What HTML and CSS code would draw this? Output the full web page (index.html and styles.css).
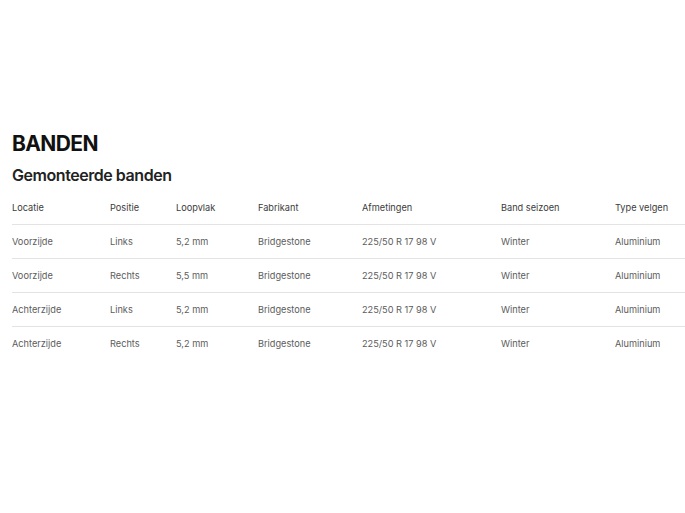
FILE: index.html
```html
<!DOCTYPE html>
<html lang="nl">
<head>
<meta charset="utf-8">
<link rel="stylesheet" href="styles.css">
</head>
<body>
<main class="page">
  <h1 class="title">BANDEN</h1>
  <h2 class="subtitle">Gemonteerde banden</h2>
  <table class="tires">
    <colgroup>
      <col class="c1"><col class="c2"><col class="c3"><col class="c4"><col class="c5"><col class="c6"><col class="c7">
    </colgroup>
    <thead>
      <tr><th>Locatie</th><th>Positie</th><th>Loopvlak</th><th>Fabrikant</th><th>Afmetingen</th><th>Band seizoen</th><th>Type velgen</th></tr>
    </thead>
    <tbody>
      <tr><td>Voorzijde</td><td>Links</td><td>5,2 mm</td><td>Bridgestone</td><td>225/50 R 17 98 V</td><td>Winter</td><td>Aluminium</td></tr>
      <tr><td>Voorzijde</td><td>Rechts</td><td>5,5 mm</td><td>Bridgestone</td><td>225/50 R 17 98 V</td><td>Winter</td><td>Aluminium</td></tr>
      <tr><td>Achterzijde</td><td>Links</td><td>5,2 mm</td><td>Bridgestone</td><td>225/50 R 17 98 V</td><td>Winter</td><td>Aluminium</td></tr>
      <tr><td>Achterzijde</td><td>Rechts</td><td>5,2 mm</td><td>Bridgestone</td><td>225/50 R 17 98 V</td><td>Winter</td><td>Aluminium</td></tr>
    </tbody>
  </table>
</main>
</body>
</html>
```

FILE: styles.css
```css
html, body {
  margin: 0;
  padding: 0;
  background: #ffffff;
  overflow: hidden;
}
body {
  font-family: Inter, "Liberation Sans", sans-serif;
  color: #111;
}
.page {
  padding: 131px 0 0 12px;
}
.title {
  margin: 0;
  font-size: 21px;
  line-height: 26px;
  font-weight: 700;
  letter-spacing: -0.6px;
  color: #111;
}
.subtitle {
  margin: 8px 0 0;
  font-size: 16px;
  line-height: 20px;
  font-weight: 600;
  letter-spacing: -0.45px;
  color: #222;
}
.tires {
  margin-top: 5px;
  border-collapse: collapse;
  table-layout: fixed;
  width: 680px;
}
.c1 { width: 98px; }
.c2 { width: 66px; }
.c3 { width: 82px; }
.c4 { width: 104px; }
.c5 { width: 139px; }
.c6 { width: 114px; }
.c7 { width: 77px; }
.tires th,
.tires td {
  padding: 0;
  height: 33px;
  text-align: left;
  vertical-align: middle;
  font-size: 9.2px;
  font-weight: 400;
  white-space: nowrap;
}
.tires th {
  color: #3c3c3c;
  height: 34px;
}
.tires td {
  color: #5c5c5c;
}
.tires thead tr,
.tires tbody tr {
  border-bottom: 1px solid #e3e3e3;
}
.tires tbody tr:last-child {
  border-bottom: none;
}
```
